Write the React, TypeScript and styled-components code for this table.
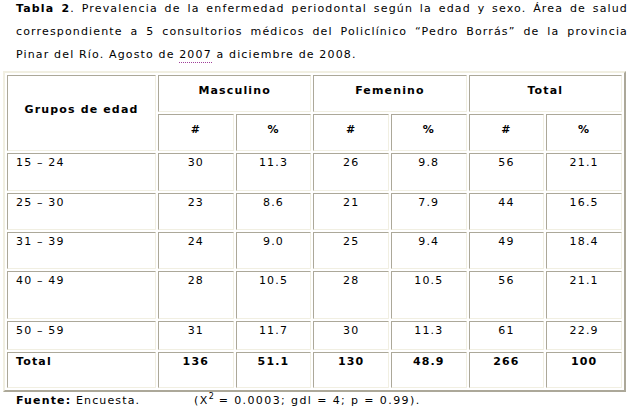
import React from "react";
import styled, { createGlobalStyle } from "styled-components";

const Global = createGlobalStyle`
  html, body { margin: 0; padding: 0; background: #fff; }
  body { font-family: "DejaVu Sans", Verdana, sans-serif; font-size: 11px; color: #000; letter-spacing: 1.15px; }
`;

const Page = styled.div`
  width: 633px;
  padding-left: 3px;
  box-sizing: border-box;
`;

const Caption = styled.p`
  margin: -3px 0 0 13px;
  width: 612px;
  line-height: 23px;
`;

const CapLine = styled.span<{ $last?: boolean }>`
  display: block;
  text-align: justify;
  text-align-last: ${(p) => (p.$last ? "left" : "justify")};
  white-space: nowrap;
`;

const Marked = styled.span`
  border-bottom: 1px dotted #a0409a;
  padding-bottom: 1px;
`;

const Table = styled.table`
  margin-top: 5px;
  width: 623px;
  border-collapse: separate;
  border-spacing: 2px;
  border: 2px solid;
  border-color: #f1efe2 #aca899 #aca899 #f1efe2;
  table-layout: fixed;
  font-size: 11px;
  letter-spacing: 1.15px;
`;

const Row = styled.tr<{ $h: number }>`
  & > td { height: ${(p) => p.$h}px; }
`;

const Cell = styled.td<{ $head?: boolean; $bold?: boolean; $left?: boolean }>`
  box-sizing: border-box;
  border: 1px solid;
  border-color: #aca899 #f1efe2 #f1efe2 #aca899;
  padding: ${(p) => (p.$head ? "0 2px 6px" : "2px 2px 0")};
  padding-left: ${(p) => (p.$left ? "8px" : "2px")};
  text-align: ${(p) => (p.$left ? "left" : "center")};
  vertical-align: ${(p) => (p.$head ? "middle" : "top")};
  font-weight: ${(p) => (p.$head || p.$bold ? "bold" : "normal")};
  line-height: 14px;
`;

const Footer = styled.div`
  display: flex;
  padding-left: 13px;
  line-height: 14px;
  margin-top: 2px;
`;

const Source = styled.span`
  width: 178px;
  flex: none;
`;

const Stat = styled.span`
  letter-spacing: 1.4px;
  & sup { font-size: 8px; line-height: 0; vertical-align: 5px; letter-spacing: 0; }
`;

const rows: { g: string; v: string[]; h: number }[] = [
  { g: "15 – 24", v: ["30", "11.3", "26", "9.8", "56", "21.1"], h: 38 },
  { g: "25 – 30", v: ["23", "8.6", "21", "7.9", "44", "16.5"], h: 37 },
  { g: "31 – 39", v: ["24", "9.0", "25", "9.4", "49", "18.4"], h: 37 },
  { g: "40 – 49", v: ["28", "10.5", "28", "10.5", "56", "21.1"], h: 48 },
  { g: "50 – 59", v: ["31", "11.7", "30", "11.3", "61", "22.9"], h: 29 },
];

export default function App() {
  return (
    <Page>
      <Global />
      <Caption>
        <CapLine>
          <b>Tabla 2</b>. Prevalencia de la enfermedad periodontal según la edad y sexo. Área de salud
        </CapLine>
        <CapLine>
          correspondiente a 5 consultorios médicos del Policlínico “Pedro Borrás” de la provincia
        </CapLine>
        <CapLine $last>
          Pinar del Río. Agosto de <Marked>2007</Marked> a diciembre de 2008.
        </CapLine>
      </Caption>
      <Table>
        <colgroup>
          <col style={{ width: "149px" }} />
          <col /><col /><col /><col /><col /><col />
        </colgroup>
        <tbody>
          <Row $h={37}>
            <Cell $head rowSpan={2}>Grupos de edad</Cell>
            <Cell $head colSpan={2}>Masculino</Cell>
            <Cell $head colSpan={2}>Femenino</Cell>
            <Cell $head colSpan={2}>Total</Cell>
          </Row>
          <Row $h={37}>
            <Cell $head>#</Cell>
            <Cell $head>%</Cell>
            <Cell $head>#</Cell>
            <Cell $head>%</Cell>
            <Cell $head>#</Cell>
            <Cell $head>%</Cell>
          </Row>
          {rows.map((r) => (
            <Row key={r.g} $h={r.h}>
              <Cell $left>{r.g}</Cell>
              {r.v.map((x, i) => (
                <Cell key={i}>{x}</Cell>
              ))}
            </Row>
          ))}
          <Row $h={36}>
            <Cell $left $bold>Total</Cell>
            <Cell $bold>136</Cell>
            <Cell $bold>51.1</Cell>
            <Cell $bold>130</Cell>
            <Cell $bold>48.9</Cell>
            <Cell $bold>266</Cell>
            <Cell $bold>100</Cell>
          </Row>
        </tbody>
      </Table>
      <Footer>
        <Source>
          <b>Fuente:</b> Encuesta.
        </Source>
        <Stat>
          (X<sup>2</sup> = 0.0003; gdl = 4; p = 0.99).
        </Stat>
      </Footer>
    </Page>
  );
}
